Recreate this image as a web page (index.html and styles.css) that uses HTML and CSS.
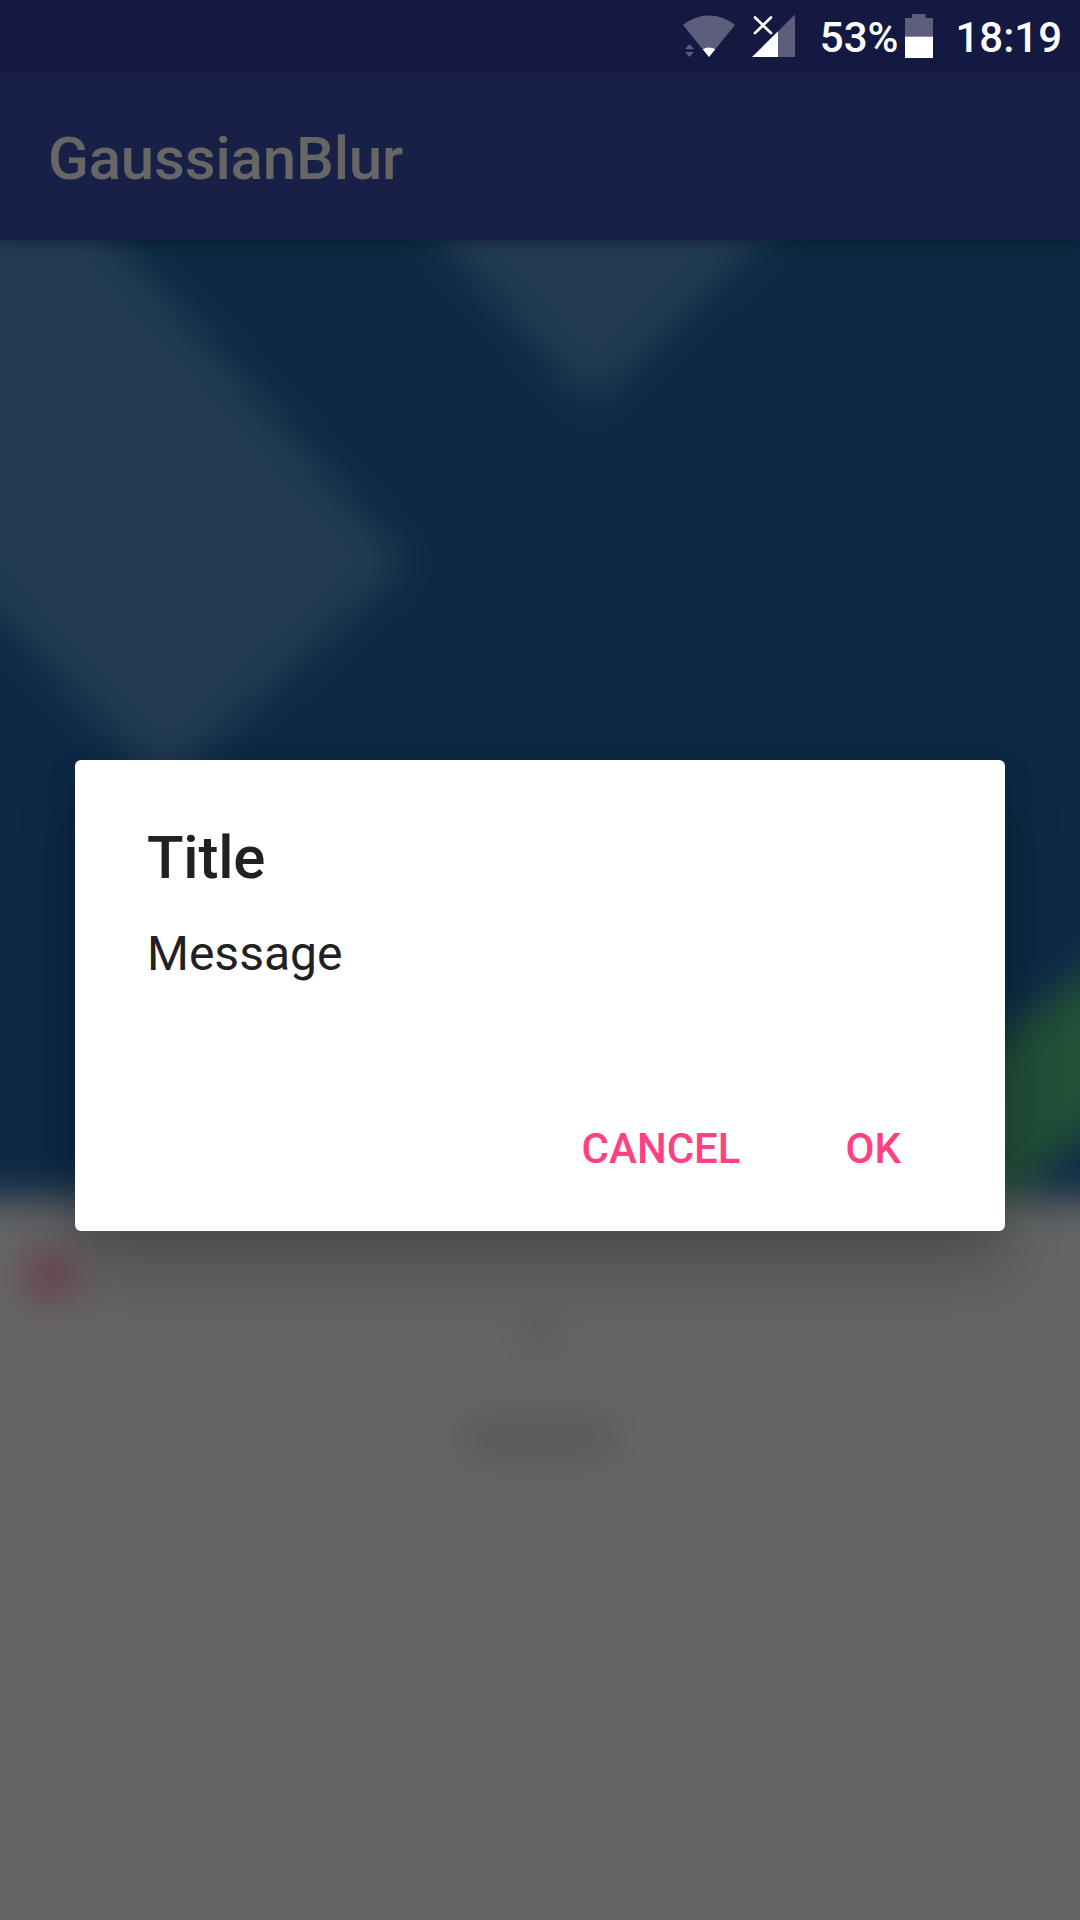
FILE: index.html
```html
<!DOCTYPE html>
<html lang="en">
<head>
<meta charset="utf-8">
<title>GaussianBlur</title>
<link rel="stylesheet" href="styles.css">
</head>
<body>
<div class="screen">
  <header class="status-bar">
    <svg class="wifi" width="54" height="72" viewBox="682 0 54 72">
      <path class="dim" d="M709 57 683 25Q694.500 15.500 709 15.500T735 25Z"/>
      <path class="lit" d="M709 57 702.800 49.200Q709 45.800 715.200 49.200Z"/>
      <path class="dim" d="M685 49.200 689.500 44.300 694 49.200ZM685 52 694 52 689.500 57Z"/>
    </svg>
    <svg class="signal" width="46" height="72" viewBox="750 0 46 72">
      <path class="dim" d="M778 31.300 795 14.500V57H778Z"/>
      <path class="lit" d="M752 57 778 31.300V57Z"/>
      <path class="cross" d="M755 17.500 771 33M771 17.500 755 33"/>
    </svg>
    <span class="percent">53%</span>
    <svg class="battery" width="28" height="72" viewBox="905 0 28 72">
      <path class="dim" d="M905 18H912V14H925.500V18H933V37H905Z"/>
      <path class="lit" d="M905 36.700H933V58H905Z"/>
    </svg>
    <span class="clock">18:19</span>
  </header>
  <div class="app-bar"><h1>GaussianBlur</h1></div>
  <main class="content">
    <svg class="backdrop" width="1080" height="1680" viewBox="0 240 1080 1680">
      <defs>
        <filter id="soft" filterUnits="userSpaceOnUse" x="-100" y="140" width="1280" height="1880" color-interpolation-filters="sRGB">
          <feGaussianBlur stdDeviation="19"/>
        </filter>
      </defs>
      <g filter="url(#soft)">
        <path fill="#0d2945" d="M-100 140H1180V1220H-100Z"/>
        <path fill="#223b52" d="M-100 0H-99L407 563 163 787-100 510Z"/>
        <path fill="#223b52" d="M350 140 592 406 862 140Z"/>
        <path fill="#214f38" d="M1150 935C1060 985 990 1030 955 1110V1210H1012C1024 1175 1065 1145 1150 1105Z"/>
        <path fill="#646464" d="M-100 1198H1180V2020H-100Z"/>
        <circle fill="#6c374a" cx="50" cy="1275" r="23"/>
        <ellipse fill="#595959" cx="541" cy="1330" rx="14" ry="24"/>
        <rect fill="#545454" x="466" y="1425" width="146" height="27" rx="10"/>
      </g>
    </svg>
    <section class="dialog" role="dialog">
      <h2>Title</h2>
      <p>Message</p>
      <div class="actions">
        <button>CANCEL</button>
        <button>OK</button>
      </div>
    </section>
  </main>
</div>
</body>
</html>
```
FILE: styles.css
```css
* { box-sizing: border-box; }
body { margin: 0; font-family: Roboto, "Liberation Sans", sans-serif; }
h1, h2, p { margin: 0; }
.screen { width: 1080px; height: 1920px; display: flex; flex-direction: column; overflow: hidden; background: #646464; }
.status-bar {
  height: 72px; flex: none; display: flex; justify-content: flex-end;
  position: relative; z-index: 2;
  padding-right: 18px; background: #131941; color: #fff;
  font-size: 42px; font-weight: 500; line-height: 75px;
}
.status-bar svg { flex: none; display: block; }
.dim { fill: #5d5e7b; }
.lit { fill: #fff; }
.cross { fill: none; stroke: #fff; stroke-width: 2.7; stroke-linecap: round; }
.signal { margin-left: 14px; }
.percent { margin-left: 24px; }
.battery { margin-left: 7px; }
.clock { margin-left: 22px; }
.app-bar {
  height: 168px; flex: none; display: flex; align-items: center; padding: 6px 0 0 48px;
  background: #192047; color: #666; position: relative; z-index: 1;
  box-shadow: 0 4px 12px rgba(0, 0, 0, .28);
}
.app-bar h1 { font-size: 60px; font-weight: 500; line-height: 70px; letter-spacing: -.17px; }
.content { flex: 1; display: grid; grid-template-columns: 1080px; grid-template-rows: 1680px; }
.backdrop { grid-area: 1 / 1; display: block; }
.dialog {
  grid-area: 1 / 1; justify-self: center; width: 930px; height: 471px; margin-top: 520px;
  position: relative; display: flex; flex-direction: column; padding: 63px 72px 37px;
  background: #fff; color: #212121; border-radius: 6px;
  box-shadow: 0 40px 60px rgba(0, 0, 0, .2), 0 2px 32px rgba(0, 0, 0, .08);
}
.dialog h2 { font-size: 60px; font-weight: 500; line-height: 70px; letter-spacing: -.2px; }
.dialog p { margin-top: 33px; font-size: 48px; line-height: 56px; }
.actions { margin-top: auto; padding-right: 8px; display: flex; justify-content: flex-end; gap: 57px; }
.actions button {
  border: 0; padding: 0 24px; background: none; color: #ff4081;
  font: 500 42px/90px Roboto, "Liberation Sans", sans-serif;
}
```
